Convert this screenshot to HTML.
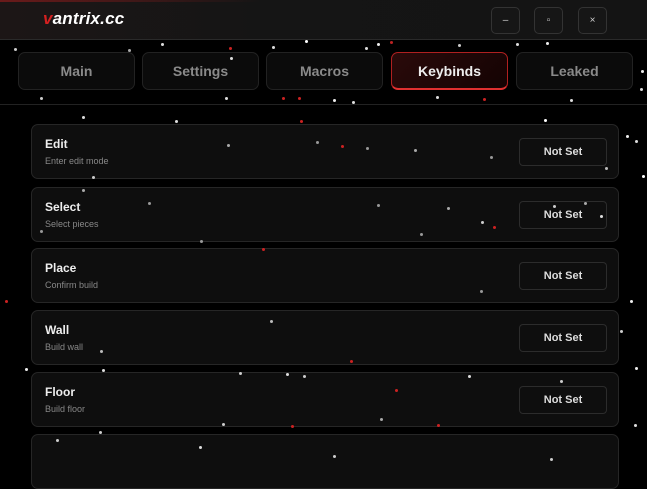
<!DOCTYPE html>
<html><head><meta charset="utf-8"><style>
*{margin:0;padding:0;box-sizing:border-box}
body{width:647px;height:446px;overflow:hidden;background:#000;font-family:"Liberation Sans",sans-serif;position:relative}
.hdr{position:absolute;left:0;top:0;width:647px;height:40px;background:linear-gradient(90deg,#1c1616,#151515 40%,#141414);border-bottom:1px solid #2a2a2a}
.hdr:before{content:"";position:absolute;left:0;top:0;width:260px;height:2px;background:linear-gradient(90deg,#6a1a1a,transparent)}
.logo{position:absolute;left:43px;top:9px;font-size:17px;font-weight:bold;font-style:italic;color:#fff;letter-spacing:0.2px}
.logo b{color:#d42020}
.wb{position:absolute;top:7px;width:29px;height:27px;border:1px solid #333;border-radius:5px;background:#161616;color:#ccc;font-size:10px;text-align:center;line-height:25px}
.tab{position:absolute;top:52px;height:38px;width:94px;border:1px solid #222;border-radius:7px;background:#0b0b0b;color:#8a8a8a;font-size:14px;font-weight:bold;text-align:center;line-height:37px}
.tab.a{background:linear-gradient(135deg,#2a0a0a,#140303);border-color:#b02020;border-bottom:2px solid #e03030;color:#eee}
.line{position:absolute;left:0;top:104px;width:647px;height:1px;background:#222}
.card{position:absolute;left:31px;width:588px;height:55px;border:1px solid #262626;border-radius:7px;background:#0e0e0e}
.card h{position:absolute;left:13px;top:12px;font-size:12px;font-weight:bold;color:#eee}
.card p{position:absolute;left:13px;top:31px;font-size:9px;color:#888}
.card i{position:absolute;left:487px;top:13px;width:88px;height:28px;border:1px solid #2c2c2c;border-radius:4px;font-style:normal;font-size:11px;font-weight:bold;color:#ddd;text-align:center;line-height:27px}
.d{position:absolute;left:0;top:0;width:3px;height:3px;border-radius:50%;background:transparent;
box-shadow:161px 43px #ddd,128px 49px #aaa,272px 46px #ddd,305px 40px #fff,365px 47px #ddd,229px 47px #c22,458px 44px #ccc,390px 41px #b22,377px 43px #eee,516px 43px #ddd,546px 42px #eee,14px 48px #ccc,230px 57px #ddd,641px 70px #eee,640px 88px #ddd,40px 97px #ccc,225px 97px #ddd,282px 97px #c22,298px 97px #c22,333px 99px #eee,352px 101px #ddd,436px 96px #ddd,483px 98px #c22,570px 99px #ddd,82px 116px #ddd,175px 120px #ddd,300px 120px #c22,544px 119px #fff,626px 135px #eee,635px 140px #ddd,642px 175px #fff,92px 176px #ccc,227px 144px #aaa,316px 141px #999,341px 145px #c22,366px 147px #999,414px 149px #aaa,490px 156px #999,605px 167px #bbb,82px 189px #aaa,148px 202px #999,377px 204px #999,447px 207px #aaa,481px 221px #ccc,493px 226px #c22,553px 205px #ccc,584px 202px #aaa,600px 215px #ddd,40px 230px #999,262px 248px #c22,420px 233px #999,200px 240px #999,630px 300px #eee,620px 330px #ccc,5px 300px #c22,270px 320px #bbb,480px 290px #999,350px 360px #c22,100px 350px #bbb,560px 380px #ccc,25px 368px #eee,102px 369px #ddd,239px 372px #ccc,286px 373px #ddd,303px 375px #ccc,468px 375px #ddd,635px 367px #eee,395px 389px #c22,380px 418px #aaa,222px 423px #ccc,291px 425px #c22,437px 424px #c22,99px 431px #ccc,199px 446px #ddd,333px 455px #ccc,550px 458px #ccc,634px 424px #ddd,56px 439px #ccc}
</style></head><body>
<div class="hdr"><div class="logo"><b>v</b>antrix.cc</div>
<div class="wb" style="left:491px">–</div><div class="wb" style="left:534px">▫</div><div class="wb" style="left:578px">×</div></div>
<div class="tab" style="left:18px;width:117px">Main</div>
<div class="tab" style="left:142px;width:117px">Settings</div>
<div class="tab" style="left:266px;width:117px">Macros</div>
<div class="tab a" style="left:391px;width:117px">Keybinds</div>
<div class="tab" style="left:516px;width:117px">Leaked</div>
<div class="line"></div>
<div class="card" style="top:124px"><h>Edit</h><p>Enter edit mode</p><i>Not Set</i></div>
<div class="card" style="top:187px"><h>Select</h><p>Select pieces</p><i>Not Set</i></div>
<div class="card" style="top:248px"><h>Place</h><p>Confirm build</p><i>Not Set</i></div>
<div class="card" style="top:310px"><h>Wall</h><p>Build wall</p><i>Not Set</i></div>
<div class="card" style="top:372px"><h>Floor</h><p>Build floor</p><i>Not Set</i></div>
<div class="card" style="top:434px"></div>
<div class="d"></div>
</body></html>
